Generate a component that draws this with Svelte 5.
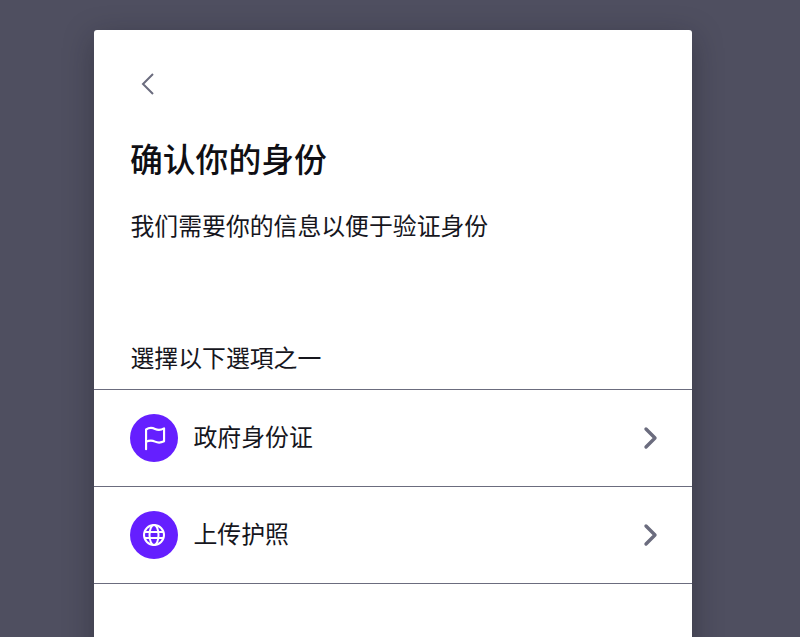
<script>
  const options = [
    { label: "政府身份证", icon: "flag" },
    { label: "上传护照", icon: "globe" }
  ];
</script>

<div class="page">
  <div class="card">
    <button class="back" aria-label="返回">
      <svg width="16" height="24" viewBox="0 0 16 24" fill="none">
        <path d="M13 2 L3 12 L13 22" stroke="#6b6c7e" stroke-width="2" />
      </svg>
    </button>
    <h1>确认你的身份</h1>
    <p class="sub">我们需要你的信息以便于验证身份</p>
    <p class="choose">選擇以下選項之一</p>
    <ul>
      {#each options as opt}
        <li>
          <span class="badge">
            {#if opt.icon === "flag"}
              <svg width="27" height="27" viewBox="0 0 24 24" fill="none" stroke="#fff" stroke-width="1.900" stroke-linecap="round" stroke-linejoin="round">
                <path d="M4.500 21.500 V4 C7.500 2 10 2.300 12.500 3.500 C15 4.700 17.500 4.700 20.500 3 V14.500 C17.500 16 15 16 12.500 14.800 C10 13.600 7.500 13.500 4.500 15" />
              </svg>
            {:else}
              <svg width="24" height="24" viewBox="0 0 24 24" fill="none" stroke="#fff" stroke-width="2">
                <circle cx="12" cy="12" r="10" />
                <ellipse cx="12" cy="12" rx="4.500" ry="10" />
                <path d="M2.500 9 H21.500 M2.500 15 H21.500" />
              </svg>
            {/if}
          </span>
          <span class="label">{opt.label}</span>
          <svg class="chev" width="16" height="24" viewBox="0 0 16 24" fill="none">
            <path d="M3 3 L12 12 L3 21" stroke="#6b6c7e" stroke-width="3.400" stroke-linecap="round" stroke-linejoin="round" />
          </svg>
        </li>
      {/each}
    </ul>
  </div>
</div>

<style>
  :global(body) {
    background: #4f4f60;
    overflow: hidden;
  }

  .page {
    height: 637px;
    padding-top: 30px;
    box-sizing: border-box;
    overflow: hidden;
    font-family: "Noto Sans CJK SC", "Liberation Sans", sans-serif;
  }

  .card {
    width: 598px;
    height: 640px;
    margin-left: 94px;
    background: #fff;
    border-radius: 3px;
    box-shadow: 0 8px 30px rgba(20, 20, 30, 0.35);
    color: #16161d;
  }

  .back {
    display: block;
    margin: 0;
    padding: 42px 0 0 46px;
    border: none;
    background: none;
    line-height: 0;
  }

  h1 {
    margin: 40px 0 0 36px;
    font-size: 32.800px;
    font-weight: 500;
    line-height: 44px;
    color: #0f0f14;
  }

  .sub {
    margin: 27px 0 0 36.500px;
    font-size: 23.850px;
    line-height: 36px;
  }

  .choose {
    margin: 96px 0 0 36.500px;
    font-size: 23.850px;
    line-height: 36px;
  }

  ul {
    list-style: none;
    margin: 14px 0 0;
    padding: 0;
    border-top: 1px solid #6b6c7e;
  }

  li {
    display: flex;
    align-items: center;
    height: 96px;
    padding: 0 33px 0 36px;
    border-bottom: 1px solid #6b6c7e;
  }

  .badge {
    display: flex;
    align-items: center;
    justify-content: center;
    width: 48px;
    height: 48px;
    border-radius: 50%;
    background: #651fff;
  }

  .label {
    flex: 1;
    margin-left: 15.500px;
    padding-bottom: 4px;
    font-size: 23.850px;
    line-height: 36px;
  }
</style>
